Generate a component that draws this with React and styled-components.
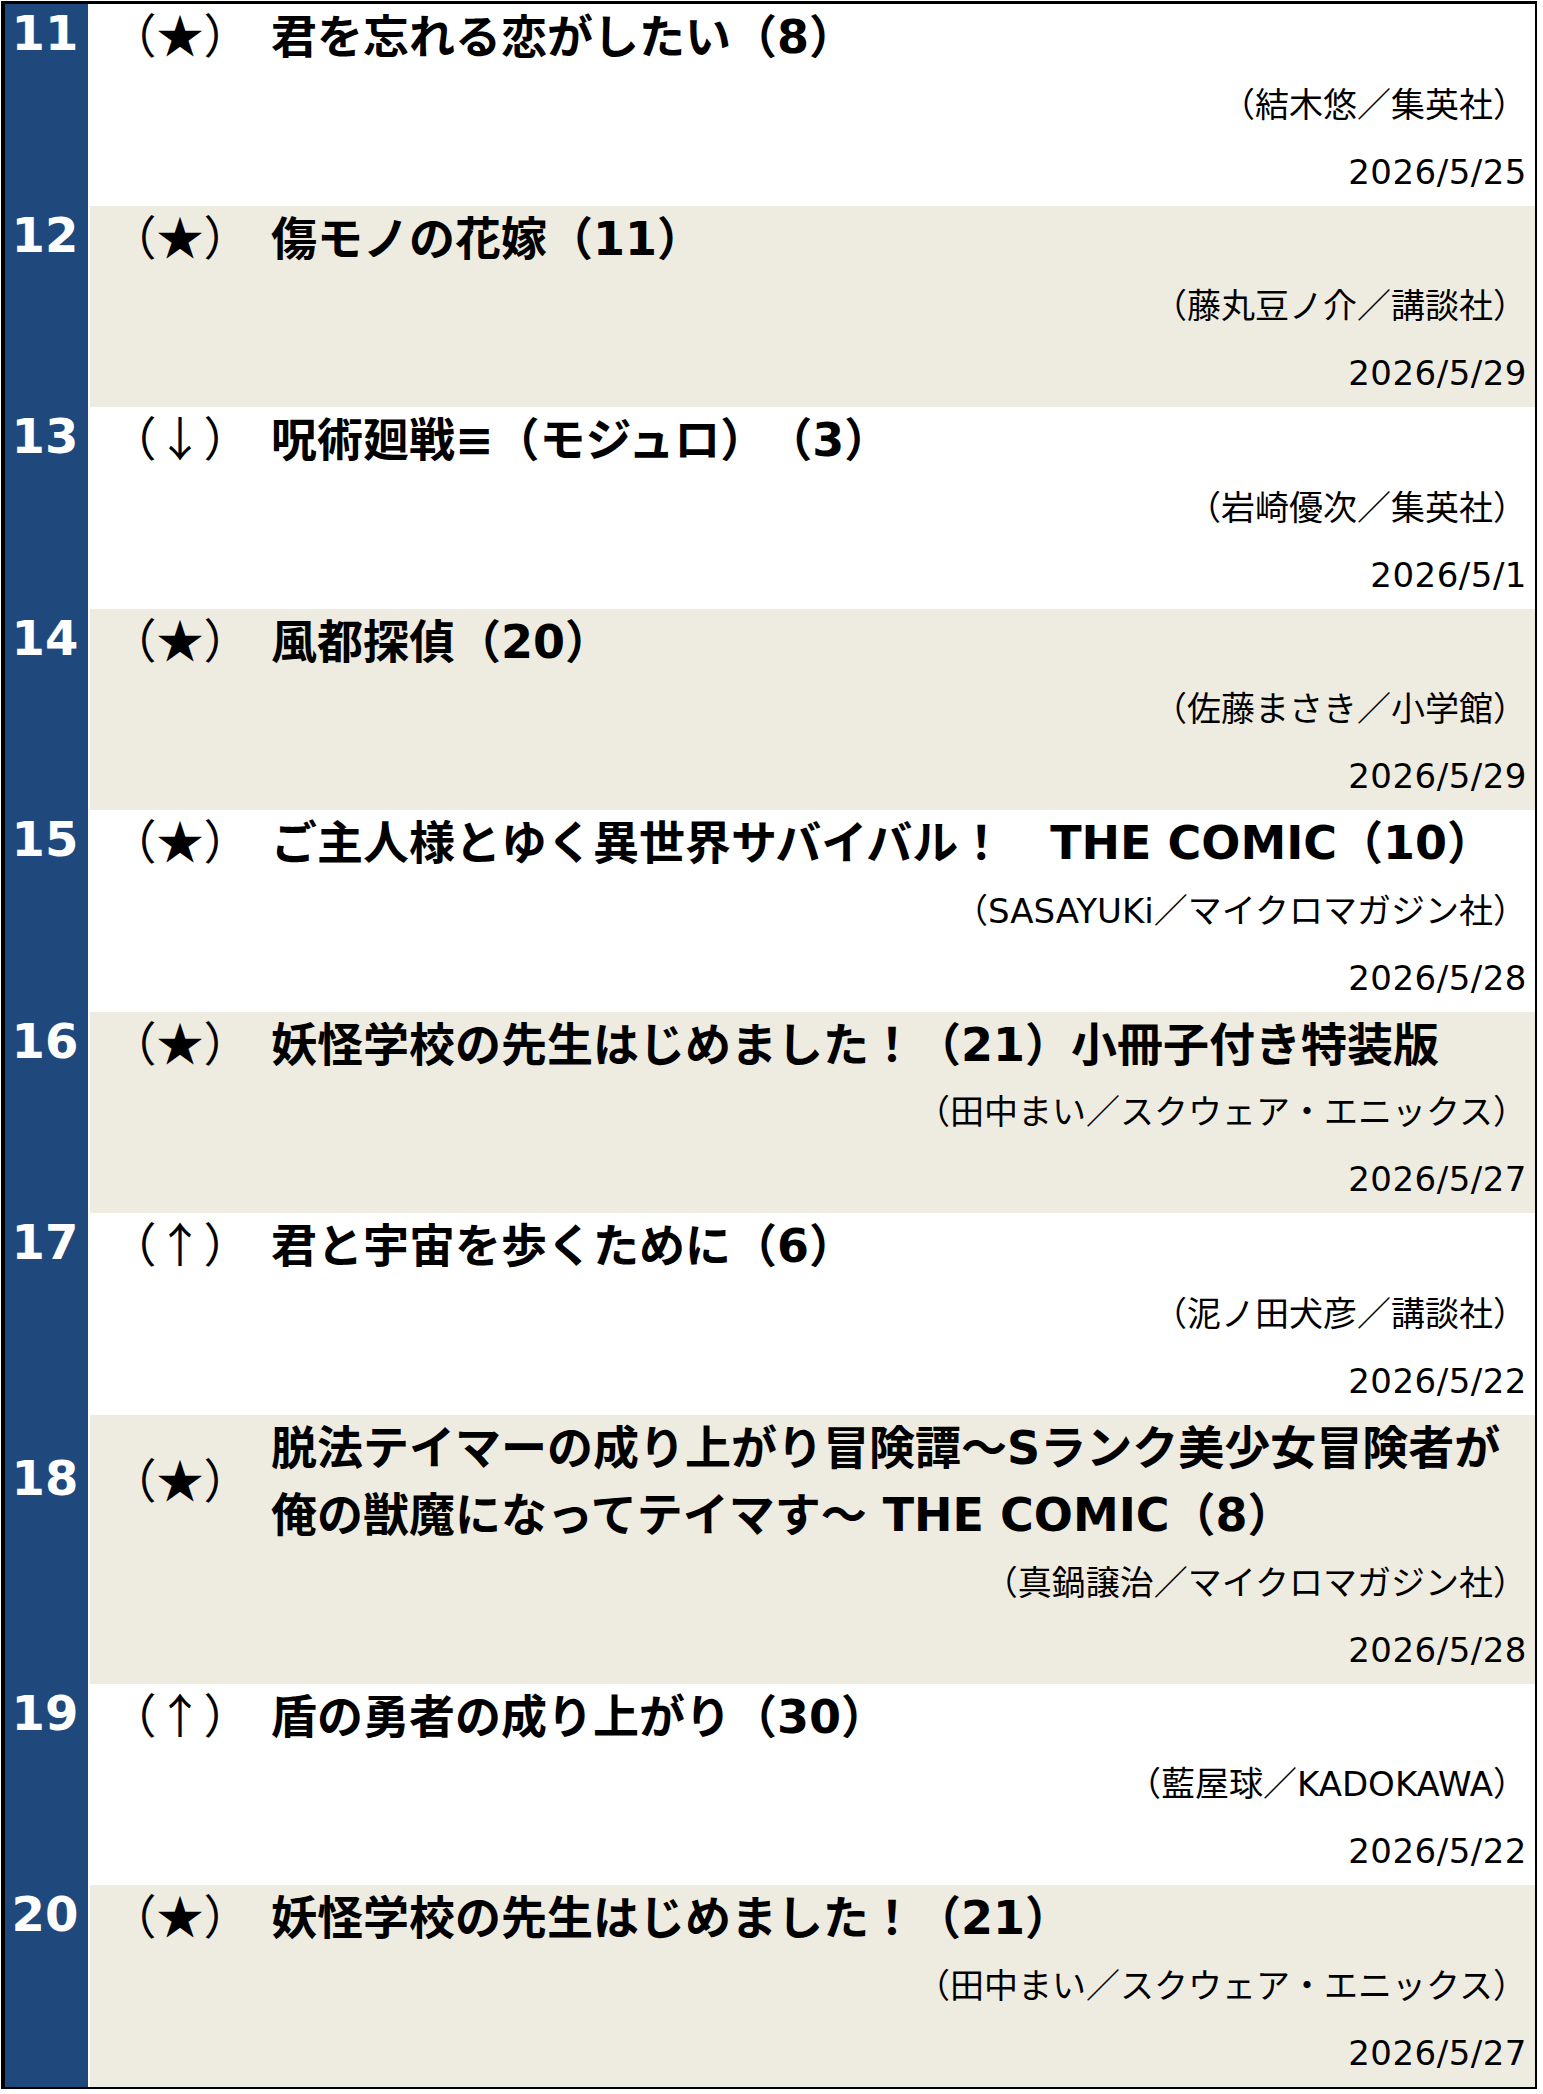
import React from 'react';
import styled, { createGlobalStyle } from 'styled-components';

const GlobalStyle = createGlobalStyle`
	html, body {
		margin: 0;
		padding: 0;
		background: #fff;
	}
	body {
		font-family: "DejaVu Sans", "Noto Sans CJK JP", sans-serif;
		color: #000;
		text-spacing-trim: space-all;
	}
`;

const LINE = 67.5;

const Frame = styled.div`
	box-sizing: border-box;
	width: 1536px;
	margin: 1px 0 0 1px;
	border: 2px solid #000;
	border-top-width: 3px;
	padding-left: 2px;
	background: #fff;
`;

const Row = styled.div`
	display: grid;
	grid-template-columns: 83px 1fr;
	column-gap: 2px;
	background: #fff;
`;

const RankCell = styled.div`
	background: #1f497d;
	border-left: 2px solid #000;
	margin-left: -2px;
	color: #fff;
	font-family: "DejaVu Sans", sans-serif;
	font-weight: bold;
	font-size: 48px;
`;

const RankLabel = styled.div`
	height: ${(p) => p.$lines * LINE}px;
	box-sizing: border-box;
	padding: 0 3px 9px 0;
	display: flex;
	align-items: center;
	justify-content: center;
`;

const Content = styled.div`
	display: grid;
	grid-template-columns: 170px 1fr;
	background: ${(p) => (p.$shaded ? '#eeece1' : '#fff')};
	padding-right: 8px;
`;

const Mark = styled.div`
	height: ${(p) => p.$lines * LINE}px;
	box-sizing: border-box;
	padding: 0 0 10px 10px;
	display: flex;
	align-items: center;
	justify-content: center;
	font-family: "Noto Sans CJK JP", sans-serif;
	font-size: 47px;
	white-space: pre;
	text-spacing-trim: space-all;
`;

const Title = styled.div`
	padding-left: 11px;
	font-size: 46px;
	font-weight: bold;
	line-height: ${LINE}px;
	white-space: nowrap;
	text-spacing-trim: space-all;
`;

const Author = styled.div`
	grid-column: 1 / -1;
	text-align: right;
	font-size: 34px;
	line-height: 67px;
	white-space: nowrap;
`;

const DateText = styled.div`
	grid-column: 1 / -1;
	text-align: right;
	font-size: 34px;
	letter-spacing: 0.5px;
	line-height: 67px;
`;

const items = [
	{ rank: 11, mark: '★', title: ['君を忘れる恋がしたい（8）'], author: '（結木悠／集英社）', date: '2026/5/25' },
	{ rank: 12, mark: '★', title: ['傷モノの花嫁（11）'], author: '（藤丸豆ノ介／講談社）', date: '2026/5/29' },
	{ rank: 13, mark: '↓', title: ['呪術廻戦≡（モジュロ）（3）'], author: '（岩崎優次／集英社）', date: '2026/5/1' },
	{ rank: 14, mark: '★', title: ['風都探偵（20）'], author: '（佐藤まさき／小学館）', date: '2026/5/29' },
	{ rank: 15, mark: '★', title: ['ご主人様とゆく異世界サバイバル！　THE COMIC（10）'], author: '（SASAYUKi／マイクロマガジン社）', date: '2026/5/28' },
	{ rank: 16, mark: '★', title: ['妖怪学校の先生はじめました！（21）小冊子付き特装版'], author: '（田中まい／スクウェア・エニックス）', date: '2026/5/27' },
	{ rank: 17, mark: '↑', title: ['君と宇宙を歩くために（6）'], author: '（泥ノ田犬彦／講談社）', date: '2026/5/22' },
	{
		rank: 18,
		mark: '★',
		title: ['脱法テイマーの成り上がり冒険譚～Sランク美少女冒険者が', '俺の獣魔になってテイマす～ THE COMIC（8）'],
		author: '（真鍋譲治／マイクロマガジン社）',
		date: '2026/5/28',
	},
	{ rank: 19, mark: '↑', title: ['盾の勇者の成り上がり（30）'], author: '（藍屋球／KADOKAWA）', date: '2026/5/22' },
	{ rank: 20, mark: '★', title: ['妖怪学校の先生はじめました！（21）'], author: '（田中まい／スクウェア・エニックス）', date: '2026/5/27' },
];

const RankingRow = ({ rank, mark, title, author, date }) => (
	<Row>
		<RankCell>
			<RankLabel $lines={title.length}>{rank}</RankLabel>
		</RankCell>
		<Content $shaded={rank % 2 === 0}>
			<Mark $lines={title.length}>{`（${mark}）`}</Mark>
			<Title>
				{title.map((line) => (
					<div key={line}>{line}</div>
				))}
			</Title>
			<Author>{author}</Author>
			<DateText>{date}</DateText>
		</Content>
	</Row>
);

export default function App() {
	return (
		<>
			<GlobalStyle />
			<Frame>
				{items.map((item) => (
					<RankingRow key={item.rank} {...item} />
				))}
			</Frame>
		</>
	);
}
